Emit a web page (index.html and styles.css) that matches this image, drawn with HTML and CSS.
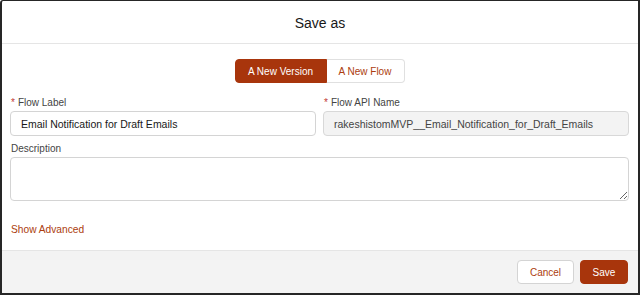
FILE: index.html
```html
<!DOCTYPE html>
<html lang="en">
<head>
  <meta charset="UTF-8" />
  <meta name="viewport" content="width=device-width, initial-scale=1.0"/>
  <title>Save as</title>
  <link rel="stylesheet" href="styles.css">
</head>
<body>
  <div class="modal">
    <div class="modal-header">
      <h2>Save as</h2>
    </div>

    <div class="modal-body">
      <div class="toggle">
        <button class="toggle-btn active">A New Version</button>
        <button class="toggle-btn">A New Flow</button>
      </div>

      <div class="row">
        <div class="field">
          <label><span class="req">*</span>Flow Label</label>
          <input type="text" class="input" value="Email Notification for Draft Emails">
        </div>
        <div class="field">
          <label><span class="req">*</span>Flow API Name</label>
          <input type="text" class="input readonly" value="rakeshistomMVP__Email_Notification_for_Draft_Emails" readonly>
        </div>
      </div>

      <div class="field">
        <label>Description</label>
        <textarea class="textarea"></textarea>
      </div>

      <a class="link" href="#">Show Advanced</a>
    </div>

    <div class="modal-footer">
      <button class="btn btn-neutral">Cancel</button>
      <button class="btn btn-brand">Save</button>
    </div>
  </div>
</body>
</html>
```

FILE: styles.css
```css
* {
  box-sizing: border-box;
}

body {
  margin: 0;
  font-family: "Liberation Sans", Arial, sans-serif;
  background: #fff;
}

.modal {
  width: 640px;
  height: 295px;
  border-style: solid;
  border-color: #262626;
  border-width: 1px 2px 2px 2px;
  border-radius: 3px 0 0 0;
  display: flex;
  flex-direction: column;
  background: #fff;
}

.modal-header {
  height: 43px;
  border-bottom: 1px solid #e5e5e5;
  display: flex;
  align-items: center;
  justify-content: center;
}

.modal-header h2 {
  margin: 0;
  padding-top: 2px;
  font-size: 14px;
  font-weight: 400;
  color: #181818;
}

.modal-body {
  flex: 1;
  padding: 15px 9px 0 8px;
}

.toggle {
  display: flex;
  justify-content: center;
  margin-bottom: 13px;
}

.toggle-btn {
  height: 24px;
  font-family: inherit;
  font-size: 10px;
  padding: 0;
  white-space: nowrap;
  background: #fff;
  color: #ac3d0e;
  border: 1px solid #e0e0e0;
  cursor: pointer;
}

.toggle-btn:first-child {
  border-radius: 4px 0 0 4px;
  width: 92px;
}

.toggle-btn:last-child {
  border-left: none;
  border-radius: 0 4px 4px 0;
  width: 78px;
}

.toggle-btn.active {
  background: #a8350c;
  border-color: #a8350c;
  color: #fff;
}

.row {
  display: flex;
  gap: 7px;
  margin-bottom: 6px;
}

.row .field {
  flex: 1;
}

.field label {
  display: block;
  font-size: 10px;
  line-height: 14px;
  color: #444;
  margin-bottom: 1px;
  padding-left: 1px;
}

.req {
  color: #c23934;
  margin-right: 3px;
}

.input {
  width: 100%;
  height: 25px;
  border: 1px solid #d4d4d4;
  border-radius: 4px;
  padding: 1px 10px 0;
  font-family: inherit;
  font-size: 10.5px;
  color: #181818;
  background: #fff;
}

.input.readonly {
  background: #f3f3f3;
  color: #444;
  border-color: #d8d8d8;
}

.textarea {
  display: block;
  width: 100%;
  height: 44px;
  border: 1px solid #d4d4d4;
  border-radius: 4px;
  font-family: inherit;
  font-size: 11px;
  padding: 6px 10px;
}

.link {
  display: inline-block;
  margin-top: 22px;
  margin-left: 1px;
  font-size: 10.2px;
  line-height: 14px;
  color: #ac3d0e;
  text-decoration: none;
}

.modal-footer {
  height: 43px;
  background: #f3f3f3;
  border-top: 1px solid #e5e5e5;
  display: flex;
  align-items: center;
  justify-content: flex-end;
  gap: 6px;
  padding-right: 10px;
}

.btn {
  height: 24px;
  font-family: inherit;
  font-size: 10px;
  border-radius: 4px;
  cursor: pointer;
}

.btn-neutral {
  width: 57px;
  background: #fff;
  color: #ac3d0e;
  border: 1px solid #d4d4d4;
}

.btn-brand {
  width: 48px;
  background: #a8350c;
  color: #fff;
  border: 1px solid #a8350c;
}
```
